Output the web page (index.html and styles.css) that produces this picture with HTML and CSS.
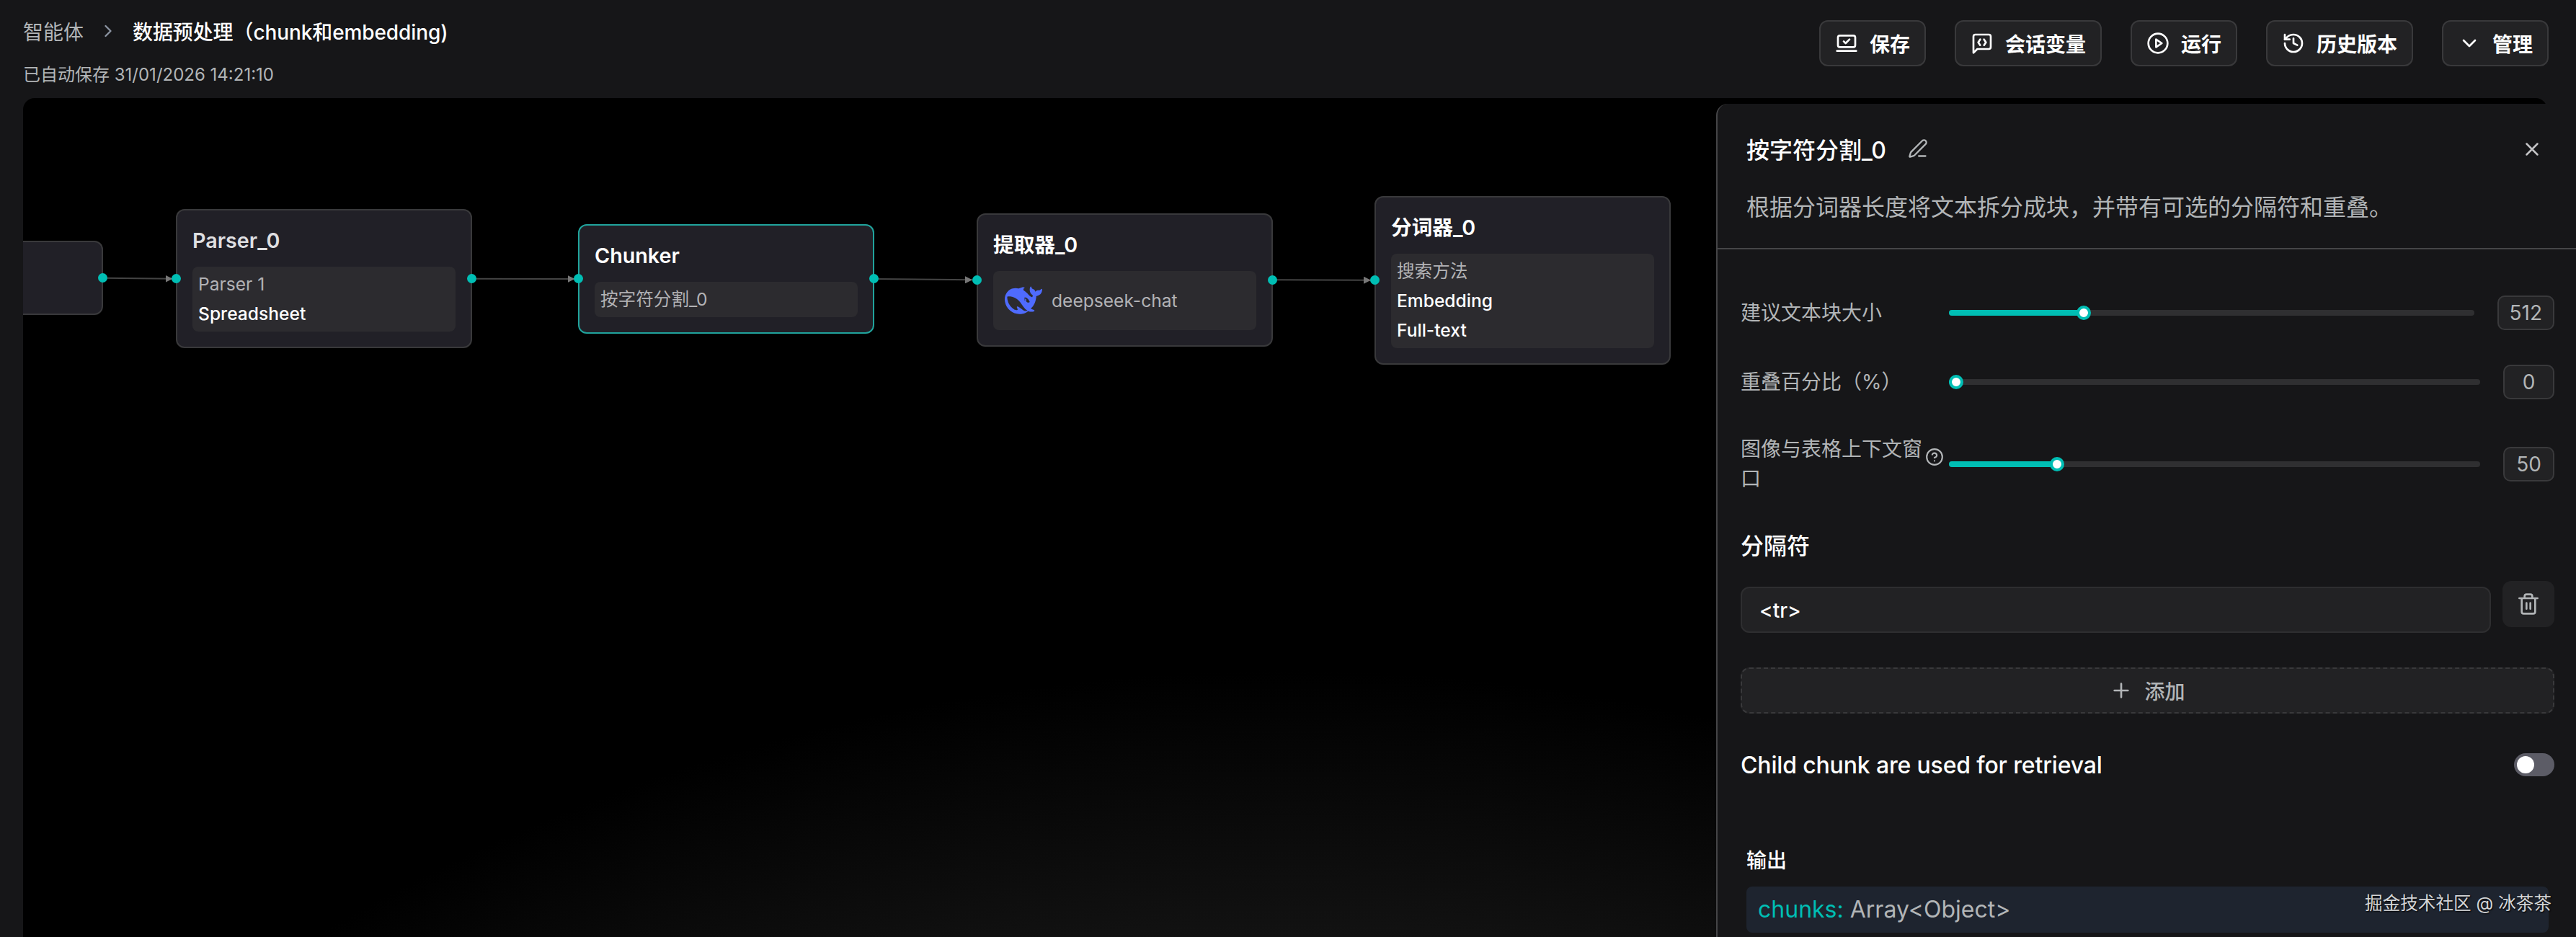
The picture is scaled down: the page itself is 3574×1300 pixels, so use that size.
FILE: index.html
```html
<!DOCTYPE html>
<html lang="zh-CN">
<head>
    <meta charset="UTF-8">
    <meta name="viewport" content="width=device-width, initial-scale=1.0">
    <title>数据预处理（chunk和embedding)</title>
    <link rel="stylesheet" href="styles.css">
</head>
<body>
    <header class="header">
        <div class="header-info">
            <nav class="breadcrumb">
                <a class="breadcrumb-link">智能体</a>
                <svg class="icon breadcrumb-sep" viewBox="0 0 24 24"><path d="m9 18 6-6-6-6"/></svg>
                <span class="breadcrumb-page">数据预处理（chunk和embedding)</span>
            </nav>
            <div class="saved-at">已自动保存 31/01/2026 14:21:10</div>
        </div>
        <div class="actions">
            <button class="btn">
                <svg class="icon" viewBox="0 0 24 24"><rect x="3" y="4" width="18" height="12" rx="2"/><path d="m9 10 2 2 4-4M2 20h20"/></svg>
                保存
            </button>
            <button class="btn">
                <svg class="icon" viewBox="0 0 24 24"><path d="M21 16a2 2 0 0 1-2 2H7l-4 4V5a2 2 0 0 1 2-2h14a2 2 0 0 1 2 2zM10 8l-2 3 2 3M14 8l2 3-2 3"/></svg>
                会话变量
            </button>
            <button class="btn">
                <svg class="icon" viewBox="0 0 24 24"><circle cx="12" cy="12" r="10"/><path d="m10 8 6 4-6 4z"/></svg>
                运行
            </button>
            <button class="btn">
                <svg class="icon" viewBox="0 0 24 24"><path d="M3 12a9 9 0 1 0 9-9 9.750 9.750 0 0 0-6.740 2.740L3 8"/><path d="M3 3v5h5M12 7v5l4 2"/></svg>
                历史版本
            </button>
            <button class="btn">
                <svg class="icon" viewBox="0 0 24 24"><path d="m6 9 6 6 6-6"/></svg>
                管理
            </button>
        </div>
    </header>

    <main class="canvas">
        <svg class="edges" width="2350" height="1164">
            <defs>
                <marker id="arrow" viewBox="0 0 10 10" refX="10" refY="5" markerWidth="10" markerHeight="10" markerUnits="userSpaceOnUse">
                    <path d="M0 0 10 5 0 10z" fill="#777"/>
                </marker>
            </defs>
            <path d="M110.500 249.800 207.500 250.800" marker-end="url(#arrow)"/>
            <path d="M623 250.800 765.500 251" marker-end="url(#arrow)"/>
            <path d="M1181 251 1317 252.300" marker-end="url(#arrow)"/>
            <path d="M1733 252.300 1870 252.700" marker-end="url(#arrow)"/>
        </svg>

        <!-- flow nodes -->
        <section class="node node-begin">
            <span class="handle handle-right"></span>
        </section>

        <section class="node node-parser">
            <span class="handle handle-left"></span>
            <h3 class="node-title muted">Parser_0</h3>
            <div class="node-box">
                <p class="label">Parser 1</p>
                <p>Spreadsheet</p>
            </div>
            <span class="handle handle-right"></span>
        </section>

        <section class="node node-chunker selected">
            <span class="handle handle-left"></span>
            <h3 class="node-title">Chunker</h3>
            <div class="node-box">
                <p class="label">按字符分割_0</p>
            </div>
            <span class="handle handle-right"></span>
        </section>

        <section class="node node-extractor">
            <span class="handle handle-left"></span>
            <h3 class="node-title">提取器_0</h3>
            <div class="node-box model">
                <svg class="whale" viewBox="0 0 24 24"><path d="M23.748 4.482c-.254-.124-.364.113-.512.234-.051.039-.094.09-.137.136-.372.397-.806.657-1.373.626-.829-.046-1.537.214-2.163.848-.133-.782-.575-1.248-1.247-1.548-.352-.156-.708-.311-.955-.65-.172-.241-.219-.51-.305-.774-.055-.16-.11-.323-.293-.35-.2-.031-.278.136-.356.276-.313.572-.434 1.202-.422 1.840.027 1.436.633 2.580 1.838 3.393.137.093.172.187.129.323-.082.280-.18.552-.266.833-.055.179-.137.217-.329.140a5.526 5.526 0 0 1-1.736-1.180c-.857-.828-1.631-1.742-2.597-2.458a11.365 11.365 0 0 0-.689-.471c-.985-.957.130-1.743.388-1.836.270-.098.093-.432-.779-.428-.872.004-1.670.295-2.687.684a3.055 3.055 0 0 1-.465.137 9.597 9.597 0 0 0-2.883-.102c-1.885.210-3.390 1.102-4.497 2.623C.082 8.606-.231 10.684.152 12.850c.403 2.284 1.569 4.175 3.360 5.653 1.858 1.533 3.997 2.284 6.438 2.140 1.482-.085 3.133-.284 4.994-1.860.470.234.962.327 1.780.397.630.059 1.236-.030 1.705-.128.735-.156.684-.837.419-.961-2.155-1.004-1.682-.595-2.113-.926 1.096-1.296 2.746-2.642 3.392-7.003.050-.347.007-.565 0-.845-.004-.170.035-.237.230-.256a4.173 4.173 0 0 0 1.545-.475c1.396-.763 1.960-2.015 2.093-3.517.020-.230-.004-.467-.247-.588zM11.581 18c-2.089-1.642-3.102-2.183-3.520-2.160-.392.024-.321.471-.235.763.090.288.207.486.371.739.114.167.192.416-.113.603-.673.416-1.842-.140-1.897-.167-1.361-.802-2.500-1.860-3.301-3.307-.774-1.393-1.224-2.887-1.298-4.482-.020-.386.093-.522.477-.592a4.696 4.696 0 0 1 1.529-.039c2.132.312 3.946 1.265 5.468 2.774.868.860 1.525 1.887 2.202 2.891.720 1.066 1.494 2.082 2.480 2.914.348.292.625.514.891.677-.802.090-2.140.110-3.054-.614zm1-6.440a.306.306 0 0 1 .415-.287.302.302 0 0 1 .2.288.306.306 0 0 1-.31.307.303.303 0 0 1-.304-.308zm3.110 1.596c-.2.081-.399.151-.59.160a1.245 1.245 0 0 1-.798-.254c-.274-.230-.470-.358-.552-.758a1.730 1.730 0 0 1 .016-.588c.070-.327-.008-.537-.239-.727-.187-.156-.426-.199-.688-.199a.559.559 0 0 1-.254-.078.253.253 0 0 1-.114-.358c.028-.054.160-.186.192-.210.356-.202.767-.136 1.146.016.352.144.618.408 1.001.782.391.451.462.576.685.914.176.265.336.537.445.848.067.195-.019.354-.250.452z"/></svg>
                <p class="label">deepseek-chat</p>
            </div>
            <span class="handle handle-right"></span>
        </section>

        <section class="node node-tokenizer">
            <span class="handle handle-left"></span>
            <h3 class="node-title">分词器_0</h3>
            <div class="node-box">
                <p class="label">搜索方法</p>
                <p>Embedding</p>
                <p>Full-text</p>
            </div>
        </section>
    </main>

    <!-- settings drawer over the canvas -->
    <aside class="panel">
        <div class="panel-header">
            <div class="panel-title">
                <h2>按字符分割_0</h2>
                <svg class="icon edit" viewBox="0 0 24 24"><path d="M13 21h8M21.174 6.812a1 1 0 0 0-3.986-3.987L3.842 16.174a2 2 0 0 0-.5.830l-1.321 4.352a.5.5 0 0 0 .623.622l4.353-1.320a2 2 0 0 0 .830-.497z"/></svg>
                <svg class="icon close" viewBox="0 0 24 24"><path d="M18 6 6 18M6 6l12 12"/></svg>
            </div>
            <p class="panel-desc">根据分词器长度将文本拆分成块，并带有可选的分隔符和重叠。</p>
        </div>

        <div class="panel-body">
            <div class="slider-row">
                <label class="slider-label">建议文本块大小</label>
                <div class="slider">
                    <div class="fill" style="width: 187px"></div>
                    <div class="thumb"></div>
                </div>
                <output class="value">512</output>
            </div>
            <div class="slider-row">
                <label class="slider-label">重叠百分比（%）</label>
                <div class="slider">
                    <div class="fill" style="width: 10px"></div>
                    <div class="thumb"></div>
                </div>
                <output class="value">0</output>
            </div>
            <div class="slider-row tall">
                <label class="slider-label">
                    <span>图像与表格上下文窗口</span>
                    <svg class="icon help" viewBox="0 0 24 24"><circle cx="12" cy="12" r="10"/><path d="M9.090 9a3 3 0 0 1 5.830 1c0 2-3 3-3 3M12 17h.010"/></svg>
                </label>
                <div class="slider">
                    <div class="fill" style="width: 150px"></div>
                    <div class="thumb"></div>
                </div>
                <output class="value">50</output>
            </div>

            <h4 class="section-title">分隔符</h4>
            <div class="delimiter">
                <div class="input">&lt;tr&gt;</div>
                <button class="trash">
                    <svg class="icon" viewBox="0 0 24 24"><path d="M2.500 6h19M19 6v14a2 2 0 0 1-2 2H7a2 2 0 0 1-2-2V6M8 6V4a2 2 0 0 1 2-2h4a2 2 0 0 1 2 2v2M10 11v6M14 11v6"/></svg>
                </button>
            </div>
            <button class="add">
                <svg class="icon" viewBox="0 0 24 24"><path d="M5 12h14M12 5v14"/></svg>
                添加
            </button>

            <div class="switch-row">
                <span>Child chunk are used for retrieval</span>
                <div class="switch"></div>
            </div>

            <div class="output">
                <h5>输出</h5>
                <div class="output-item"><b>chunks:</b> Array&lt;Object&gt;</div>
            </div>
        </div>
    </aside>

    <div class="watermark">掘金技术社区 @ 冰茶茶</div>
</body>
</html>
```
FILE: styles.css
```css
* {
    box-sizing: border-box;
}
body {
    position: relative;
    margin: 0;
    height: 1300px;
    overflow: hidden;
    background: #161618;
    color: #fff;
    font-family: Inter, "Noto Sans CJK SC", sans-serif;
    font-size: 28px;
}
h2, h3, h4, h5, p {
    margin: 0;
}
button {
    font: inherit;
    color: inherit;
}
.icon {
    flex: none;
    width: 32px;
    height: 32px;
    fill: none;
    stroke: currentColor;
    stroke-width: 2;
    stroke-linecap: round;
    stroke-linejoin: round;
}

/* header */
.header {
    display: flex;
    justify-content: space-between;
    height: 136px;
    padding: 0 38px 0 32px;
}
.header-info {
    padding-top: 23px;
}
.breadcrumb {
    display: flex;
    align-items: center;
    height: 40px;
}
.breadcrumb-link {
    color: #b2b5b7;
}
.breadcrumb-sep {
    width: 28px;
    height: 28px;
    margin: 0 20px;
    color: #8b93a1;
}
.breadcrumb-page {
    font-weight: 500;
    letter-spacing: -0.1px;
}
.saved-at {
    margin-top: 23px;
    font-size: 24px;
    line-height: 36px;
    color: #b2b5b7;
}
.actions {
    display: flex;
    gap: 40px;
    padding-top: 28px;
}
.btn {
    display: flex;
    align-items: center;
    gap: 16px;
    height: 64px;
    padding: 0 20px 1px;
    border: 2px solid #39393b;
    border-radius: 12px;
    background: #222224;
    font-weight: 600;
    white-space: nowrap;
}

/* canvas */
.canvas {
    position: relative;
    width: 3502px;
    height: 1164px;
    margin-left: 32px;
    border-radius: 16px 16px 0 0;
    overflow: hidden;
    background: radial-gradient(circle 2648px at 1751px 3442px, #121212 86%, #000 100%);
}
.edges {
    position: absolute;
    left: 0;
    top: 0;
    fill: none;
    stroke: #444;
    stroke-width: 2;
}
.edges marker path {
    stroke: none;
}
.node {
    position: absolute;
    width: 411px;
    padding: 21px;
    border: 2px solid #39393b;
    border-radius: 12px;
    background: #212027;
    font-size: 24.6px;
    font-weight: 500;
}
.node.selected {
    border-color: #20a39c;
}
.node-begin {
    left: -300px;
    top: 198px;
    height: 103px;
}
.node-parser {
    left: 212px;
    top: 154px;
}
.node-chunker {
    left: 770px;
    top: 175px;
}
.node-extractor {
    left: 1323px;
    top: 160px;
}
.node-tokenizer {
    left: 1875px;
    top: 136px;
}
.node-title {
    margin-bottom: 16px;
    font-size: 28.7px;
    font-weight: 600;
    line-height: 41px;
}
.node-title.muted {
    color: #dfdfe1;
}
.node-box {
    padding: 4px 8px;
    border-radius: 8px;
    background: #2c2b2f;
    line-height: 41px;
}
.node-box .label {
    color: #b2b2b5;
    font-weight: 400;
}
.node-box.model {
    display: flex;
    align-items: center;
    gap: 13px;
    height: 82px;
    padding: 0 16px;
}
.whale {
    width: 52px;
    height: 52px;
    fill: #4f6bfe;
}
.handle {
    position: absolute;
    width: 13px;
    height: 13px;
    border-radius: 50%;
    background: #00beb4;
}
.handle-left {
    left: -8px;
}
.handle-right {
    right: -8px;
}
.node-begin .handle {
    top: 43px;
}
.node-parser .handle {
    top: 88px;
}
.node-chunker .handle {
    top: 67px;
}
.node-extractor .handle {
    top: 84px;
}
.node-tokenizer .handle {
    top: 108px;
}

/* drawer */
.panel {
    position: absolute;
    left: 2381px;
    top: 144px;
    right: 0;
    bottom: 0;
    border-left: 2px solid #454547;
    border-radius: 16px 0 0 0;
    background: #161618;
    overflow: hidden;
}
.panel-header {
    height: 202px;
    padding: 38px 46px 0 40px;
    border-bottom: 2px solid #454547;
}
.panel-title {
    display: flex;
    align-items: center;
    height: 48px;
}
.panel-title h2 {
    font-size: 32px;
    font-weight: 500;
}
.edit {
    width: 28px;
    height: 28px;
    margin-left: 30px;
    color: #b2b5b7;
}
.close {
    width: 30px;
    height: 30px;
    margin-top: 2px;
    margin-left: auto;
    color: #c4c4c6;
}
.panel-desc {
    margin-top: 34px;
    font-size: 32px;
    line-height: 48px;
    color: #b2b5b7;
}
.panel-body {
    padding: 64px 30px 0 32px;
}
.slider-row {
    display: flex;
    align-items: center;
    height: 48px;
    margin-bottom: 48px;
}
.slider-row.tall {
    height: 80px;
    margin: 50px 0;
}
.slider-label {
    display: flex;
    align-items: center;
    flex: none;
    width: 289px;
    line-height: 41px;
    color: #b2b5b7;
    white-space: nowrap;
}
.slider-label span {
    width: 256px;
    white-space: normal;
}
.help {
    width: 26px;
    height: 26px;
    margin-bottom: 20px;
}
.slider {
    display: flex;
    align-items: center;
    flex: 1;
    height: 8px;
    margin-right: 32px;
    border-radius: 4px;
    background: #2f2f31;
}
.fill {
    height: 8px;
    border-radius: 4px;
    background: #00beb4;
}
.thumb {
    width: 20px;
    height: 20px;
    margin-left: -10px;
    border: 4px solid #00beb4;
    border-radius: 50%;
    background: #fff;
}
.value {
    min-width: 71px;
    height: 48px;
    padding: 0 15px;
    border: 2px solid #39393b;
    border-radius: 10px;
    background: #222224;
    color: #b2b5b7;
    line-height: 44px;
    text-align: center;
}
.section-title {
    font-size: 32px;
    font-weight: 500;
    line-height: 48px;
}
.delimiter {
    display: flex;
    gap: 16px;
    margin-top: 24px;
}
.input {
    flex: 1;
    height: 64px;
    margin-top: 8px;
    padding: 0 24px;
    border: 2px solid #2e2e30;
    border-radius: 12px;
    background: #222224;
    font-weight: 500;
    line-height: 62px;
}
.trash {
    width: 72px;
    height: 64px;
    padding: 16px 18px;
    border: 0;
    border-radius: 12px;
    background: #222224;
    color: #b2b5b7;
}
.add {
    display: flex;
    align-items: center;
    justify-content: center;
    gap: 16px;
    width: 100%;
    height: 64px;
    margin-top: 48px;
    border: 2px dashed #39393b;
    border-radius: 12px;
    background: #222224;
    color: #b2b5b7;
    font-weight: 500;
}
.switch-row {
    display: flex;
    align-items: center;
    justify-content: space-between;
    height: 48px;
    margin-top: 47px;
    font-size: 32px;
    font-weight: 500;
    letter-spacing: -0.16px;
}
.switch {
    width: 56px;
    height: 32px;
    padding: 4px;
    border-radius: 16px;
    background: #5c5c66;
}
.switch::before {
    content: "";
    display: block;
    width: 24px;
    height: 24px;
    border-radius: 50%;
    background: #fff;
}
.output {
    margin-top: 89px;
    padding: 0 8px;
}
.output h5 {
    font-size: 28px;
    font-weight: 500;
    line-height: 40px;
}
.output-item {
    height: 64px;
    margin-top: 16px;
    padding: 0 16px;
    border-radius: 8px;
    background: #1e242f;
    color: #b2b5b7;
    font-size: 32px;
    line-height: 64px;
}
.output-item b {
    color: #00beb4;
    font-weight: 400;
}
.watermark {
    position: absolute;
    right: 34px;
    bottom: 28px;
    color: #d4d5d7;
    font-size: 24.6px;
    line-height: 38px;
    text-shadow: 1px 1px 2px #000;
}
```
